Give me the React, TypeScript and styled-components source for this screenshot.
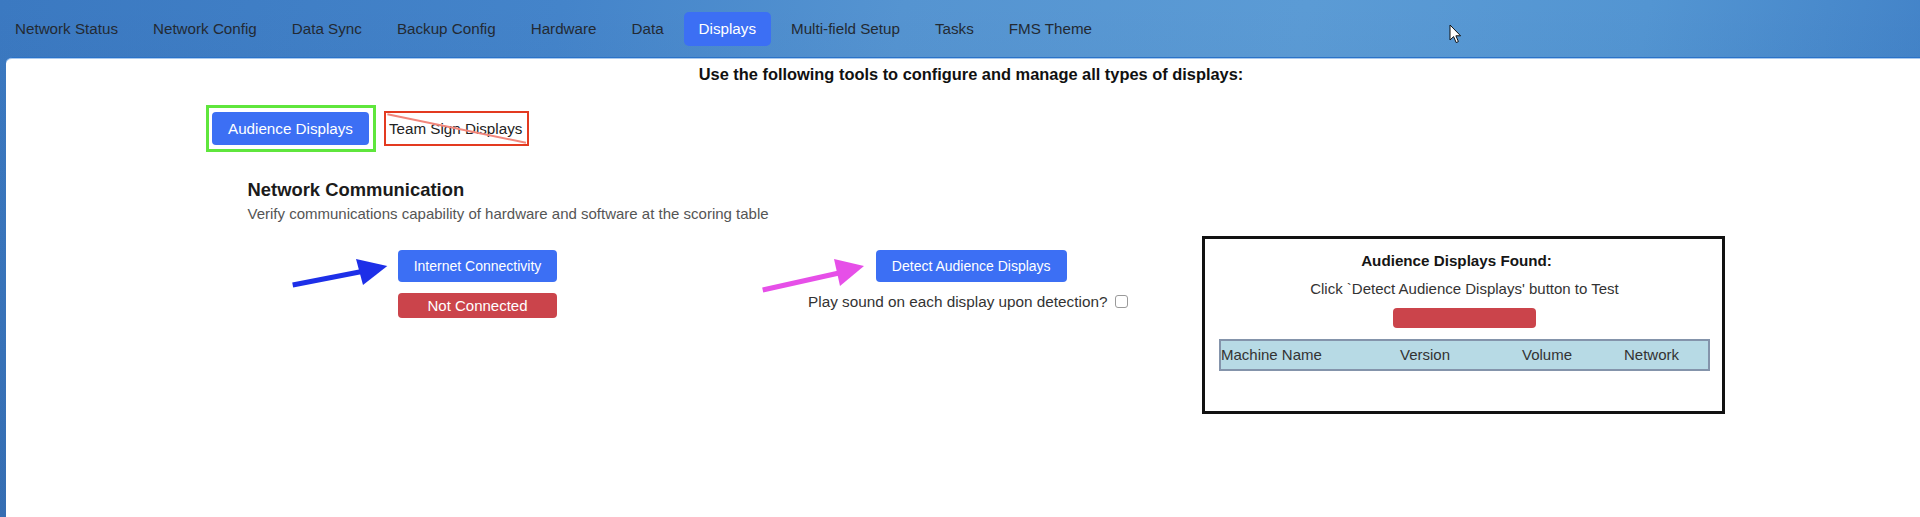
import React from 'react';
import styled, { createGlobalStyle } from 'styled-components';

const GlobalStyle = createGlobalStyle`
  html, body {
    margin: 0;
    padding: 0;
  }
  body {
    font-family: 'Liberation Sans', Arial, sans-serif;
    background: #3568a8;
  }
`;

const Page = styled.div`
  min-height: 517px;
  display: flex;
  flex-direction: column;
  background:
    linear-gradient(180deg, rgba(0, 0, 0, 0) 0, rgba(10, 30, 80, 0.14) 100%),
    linear-gradient(100deg, #3b79c1 0%, #4484ca 28%, #5594d1 45%, #5b9bd5 65%, #5395d2 82%, #3f7fc6 100%);
`;

const NavBar = styled.nav`
  position: relative;
  height: 57px;
  display: flex;
  align-items: center;
  gap: 5px;
`;

const NavLink = styled.a<{ $active?: boolean }>`
  padding: 8px 15px;
  font-size: 15.2px;
  line-height: 18px;
  border-radius: 5px;
  cursor: pointer;
  color: ${(p) => (p.$active ? '#ffffff' : '#232a33')};
  background: ${(p) => (p.$active ? '#3c6ff4' : 'transparent')};
`;

const Cursor = styled.svg`
  position: absolute;
  left: 1449px;
  top: 24px;
`;

const Panel = styled.main`
  flex: 1;
  margin-left: 6px;
  background: #ffffff;
  border-top: 1px solid #2a72c8;
  border-top-left-radius: 6px;
  box-shadow: inset 0 1px 0 #a9c9ee;
  padding-top: 7px;
`;

const Title = styled.h1`
  margin: 0;
  padding-left: 16px;
  text-align: center;
  font-size: 16.4px;
  line-height: 19px;
  font-weight: 700;
  color: #111;
`;

const TabRow = styled.div`
  display: flex;
  align-items: center;
  gap: 8px;
  margin: 21px 0 0 200px;
`;

const Frame = styled.div<{ $color: string }>`
  position: relative;
  display: flex;
  border: 3px solid ${(p) => p.$color};
`;

const GreenFrame = styled(Frame)`
  padding: 4px 4px 4px 3px;
`;

const RedFrame = styled(Frame)`
  border-width: 2px;
  padding: 0 5px 0 3px;
`;

const Strike = styled.svg`
  position: absolute;
  inset: 0;
  width: 100%;
  height: 100%;
  pointer-events: none;
`;

const SubTab = styled.button<{ $active?: boolean }>`
  font-family: inherit;
  font-size: 15.2px;
  line-height: 17px;
  padding: 8px 16px;
  border: 0;
  border-radius: 4px;
  cursor: pointer;
  color: ${(p) => (p.$active ? '#fff' : '#222')};
  background: ${(p) => (p.$active ? '#3c6ff4' : 'transparent')};
  ${(p) => !p.$active && 'padding: 7px 0;'}
`;

const Section = styled.section`
  margin: 27px 0 0 241.5px;
`;

const Heading = styled.h2`
  margin: 0;
  font-size: 18.4px;
  line-height: 21px;
  font-weight: 700;
  color: #1b1b1b;
`;

const Description = styled.p`
  margin: 5px 0 0;
  font-size: 15px;
  line-height: 17px;
  color: #555;
`;

const Row = styled.div`
  display: flex;
  align-items: flex-start;
  margin-top: 13.5px;
`;

const Column = styled.div<{ $width: number; $shift?: number }>`
  position: relative;
  width: ${(p) => p.$width}px;
  box-sizing: border-box;
  padding: 14px 0 0 ${(p) => p.$shift ?? 0}px;
  display: flex;
  justify-content: center;
`;

const Stack = styled.div<{ $gap: number }>`
  display: flex;
  flex-direction: column;
  align-items: center;
  gap: ${(p) => p.$gap}px;
`;

const StretchStack = styled(Stack)`
  align-items: stretch;
`;

const Button = styled.button`
  font-family: inherit;
  font-size: 14px;
  line-height: 16px;
  padding: 8px 16px;
  border: 0;
  border-radius: 4px;
  color: #fff;
  background: #3c6ff4;
  cursor: pointer;
`;

const Badge = styled.div`
  box-sizing: border-box;
  padding: 4px 8px;
  border-radius: 4px;
  background: #cb444b;
  color: #fff;
  font-size: 15px;
  line-height: 17px;
  text-align: center;
`;

const CheckLine = styled.label`
  display: flex;
  align-items: center;
  gap: 8px;
  margin-right: 6px;
  font-size: 15.3px;
  line-height: 17px;
  color: #333;
`;

const Check = styled.span`
  width: 13px;
  height: 13px;
  box-sizing: border-box;
  border: 1px solid #9a9a9a;
  border-radius: 3px;
  background: #fff;
`;

const Arrow = styled.svg<{ $left: number; $top: number }>`
  position: absolute;
  left: ${(p) => p.$left}px;
  top: ${(p) => p.$top}px;
  overflow: visible;
`;

const ResultBox = styled.div`
  width: 523px;
  height: 178px;
  box-sizing: border-box;
  border: 3px solid #111;
  padding: 13px 12px 0 14px;
  display: flex;
  flex-direction: column;
  align-items: center;
  gap: 11px;
`;

const BoxTitle = styled.div`
  padding-right: 16px;
  font-size: 15.2px;
  line-height: 17px;
  font-weight: 700;
  color: #151515;
`;

const BoxText = styled.div`
  font-size: 15px;
  line-height: 17px;
  color: #333;
`;

const EmptyBar = styled.div`
  width: 143px;
  height: 20px;
  border-radius: 4px;
  background: #cb444b;
`;

const TableHead = styled.div`
  align-self: stretch;
  height: 32px;
  box-sizing: border-box;
  display: grid;
  grid-template-columns: 179px 122px 102px 1fr;
  align-items: center;
  background: #b7dae5;
  border: 2px solid #8494ab;
  font-size: 15px;
  color: #333;
`;

const navItems = [
  'Network Status',
  'Network Config',
  'Data Sync',
  'Backup Config',
  'Hardware',
  'Data',
  'Displays',
  'Multi-field Setup',
  'Tasks',
  'FMS Theme',
];

const columns = ['Machine Name', 'Version', 'Volume', 'Network'];

export default function App() {
  return (
    <>
      <GlobalStyle />
      <Page>
        <NavBar>
          {navItems.map((item) => (
            <NavLink key={item} $active={item === 'Displays'}>
              {item}
            </NavLink>
          ))}
          <Cursor width="13" height="20" viewBox="0 0 13 20">
            <path d="M1 1 L1 16 L4.6 12.6 L7.2 18.6 L9.4 17.6 L6.9 11.8 L11.6 11.8 Z" fill="#fff" stroke="#111" strokeWidth="1" strokeLinejoin="round" />
          </Cursor>
        </NavBar>

        <Panel>
          <Title>Use the following tools to configure and manage all types of displays:</Title>

          <TabRow>
            <GreenFrame $color="#5fe63c">
              <SubTab $active>Audience Displays</SubTab>
            </GreenFrame>
            <RedFrame $color="#e33a20">
              <SubTab>Team Sign Displays</SubTab>
              <Strike viewBox="0 0 100 100" preserveAspectRatio="none">
                <line x1="1" y1="4" x2="99" y2="96" stroke="#f2877c" strokeWidth="2" vectorEffect="non-scaling-stroke" />
              </Strike>
            </RedFrame>
          </TabRow>

          <Section>
            <Heading>Network Communication</Heading>
            <Description>Verify communications capability of hardware and software at the scoring table</Description>

            <Row>
              <Column $width={460}>
                <Arrow $left={42} $top={20} width="100" height="32" viewBox="0 0 100 32">
                  <line x1="2.7" y1="29" x2="72" y2="15.5" stroke="#1d2fe8" strokeWidth="5" />
                  <polygon points="97.3,10 66,3 73,29" fill="#1d2fe8" />
                </Arrow>
                <StretchStack $gap={11}>
                  <Button>Internet Connectivity</Button>
                  <Badge>Not Connected</Badge>
                </StretchStack>
              </Column>

              <Column $width={494.5} $shift={33}>
                <Arrow $left={52} $top={20} width="106" height="35" viewBox="0 0 106 35">
                  <line x1="2.7" y1="34" x2="79" y2="17" stroke="#e64fe8" strokeWidth="5" />
                  <polygon points="104,10 74,3 80,30" fill="#e64fe8" />
                </Arrow>
                <Stack $gap={11}>
                  <Button>Detect Audience Displays</Button>
                  <CheckLine>
                    Play sound on each display upon detection?
                    <Check />
                  </CheckLine>
                </Stack>
              </Column>

              <ResultBox>
                <BoxTitle>Audience Displays Found:</BoxTitle>
                <BoxText>Click `Detect Audience Displays' button to Test</BoxText>
                <EmptyBar />
                <TableHead>
                  {columns.map((c) => (
                    <span key={c}>{c}</span>
                  ))}
                </TableHead>
              </ResultBox>
            </Row>
          </Section>
        </Panel>
      </Page>
    </>
  );
}
